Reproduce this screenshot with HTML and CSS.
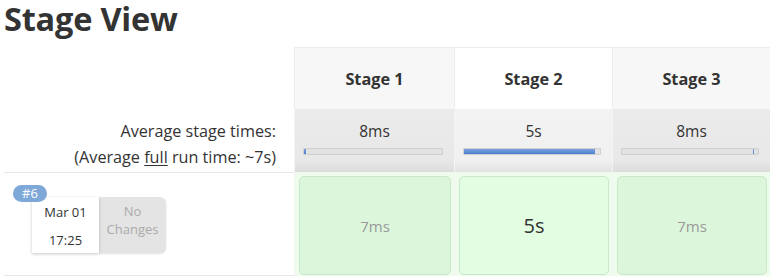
FILE: index.html
```html
<!DOCTYPE html>
<html>
<head>
<meta charset="utf-8">
<link rel="stylesheet" href="styles.css">
</head>
<body>
<div class="page">
  <h2 class="title">Stage View</h2>
  <div class="table">
    <div class="row head">
      <div class="lead"></div>
      <div class="sh">Stage 1</div>
      <div class="sh active">Stage 2</div>
      <div class="sh">Stage 3</div>
    </div>
    <div class="row avg">
      <div class="lead avg-label">
        <div>Average stage times:</div>
        <div>(Average <u>full</u> run time: ~7s)</div>
      </div>
      <div class="ac">
        <div class="at">8ms</div>
        <div class="bar"><div class="fill" style="margin-left:0;width:2px"></div></div>
      </div>
      <div class="ac active">
        <div class="at">5s</div>
        <div class="bar"><div class="fill" style="margin-left:0;width:96%"></div></div>
      </div>
      <div class="ac">
        <div class="at">8ms</div>
        <div class="bar"><div class="fill" style="margin-left:96%;width:1px"></div></div>
      </div>
    </div>
    <div class="row build">
      <div class="lead build-label">
        <div class="card">
          <span class="badge">#6</span>
          <div class="date"><div>Mar 01</div><div>17:25</div></div>
          <div class="changes">No<br>Changes</div>
        </div>
      </div>
      <div class="bc"><div class="box">7ms</div></div>
      <div class="bc active"><div class="box">5s</div></div>
      <div class="bc"><div class="box">7ms</div></div>
    </div>
  </div>
</div>
</body>
</html>
```

FILE: styles.css
```css
html, body {
  margin: 0;
  padding: 0;
  background: #fff;
}
body {
  font-family: "Open Sans", "Noto Sans", sans-serif;
  color: #333;
}
.page {
  padding-left: 4px;
}
.title {
  margin: 0 0 9px 0;
  font-size: 32.5px;
  line-height: 38px;
  font-weight: 700;
  color: #333;
  letter-spacing: -0.2px;
}
.row {
  display: grid;
  grid-template-columns: 290px 160px 158px 158px;
}
.lead {
  background: #fff;
}
.head {
  height: 62px;
}
.sh {
  background: #f7f7f7;
  border-top: 1px solid #ececec;
  border-left: 1px solid #ececec;
  display: flex;
  align-items: center;
  justify-content: center;
  font-size: 16.3px;
  font-weight: 700;
  color: #333;
  padding-top: 1px;
}
.sh.active {
  background: #fff;
}
.avg {
  height: 63px;
}
.avg-label {
  text-align: right;
  padding: 9px 18px 0 0;
  font-size: 16.2px;
  line-height: 26px;
  color: #333;
}
.avg-label u {
  text-decoration-thickness: 1px;
  text-underline-offset: 2px;
}
.ac {
  background: linear-gradient(to bottom, #ebebeb 0%, #e8e8e8 82%, #dcdcdc 100%);
  border-left: 1px solid #f4f4f4;
  padding-top: 12px;
}
.ac.active {
  background: linear-gradient(to bottom, #f3f3f3 0%, #f0f0f0 82%, #e2e2e2 100%);
}
.at {
  text-align: center;
  font-size: 15.5px;
  line-height: 20px;
  color: #333;
}
.bar {
  margin: 7px 11px 0 8px;
  height: 5px;
  background: #e2e2e2;
  border: 1px solid #cfcfcf;
  border-radius: 1px;
  display: flex;
}
.fill {
  height: 5px;
  background: linear-gradient(to bottom, #7ba3e0, #4a7fcf);
}
.build {
  height: 104px;
}
.build-label {
  border-top: 1px solid #e6e6e6;
  border-bottom: 1px solid #e6e6e6;
  padding: 24px 0 0 28px;
}
.card {
  position: relative;
  display: flex;
  width: 134px;
  height: 56px;
}
.badge {
  position: absolute;
  left: -19px;
  top: -12px;
  width: 34px;
  height: 17px;
  border-radius: 9px;
  background: #7ea8d8;
  color: #fff;
  font-size: 13px;
  line-height: 17px;
  text-align: center;
  z-index: 2;
}
.date {
  width: 67px;
  background: #fff;
  box-shadow: 0 1px 3px rgba(0, 0, 0, 0.22);
  font-size: 13px;
  line-height: 28px;
  text-align: center;
  color: #333;
  padding-top: 1px;
  box-sizing: border-box;
  z-index: 1;
}
.changes {
  width: 67px;
  background: #e4e4e4;
  border-radius: 0 6px 6px 0;
  box-shadow: 0 1px 2px rgba(0, 0, 0, 0.12);
  font-size: 13px;
  line-height: 18px;
  text-align: center;
  color: #aaa;
  padding-top: 5px;
  box-sizing: border-box;
}
.bc {
  background: #eefcee;
  border-left: 1px solid #f4f4f4;
  padding: 4px 3px 1px 4px;
  display: flex;
}
.box {
  flex: 1;
  background: #dcf6dc;
  border: 1px solid #c9e7c9;
  border-radius: 5px;
  display: flex;
  align-items: center;
  justify-content: center;
  font-size: 15px;
  color: #999;
}
.bc.active .box {
  background: #e2fde2;
  font-size: 20px;
  color: #333;
}
```
